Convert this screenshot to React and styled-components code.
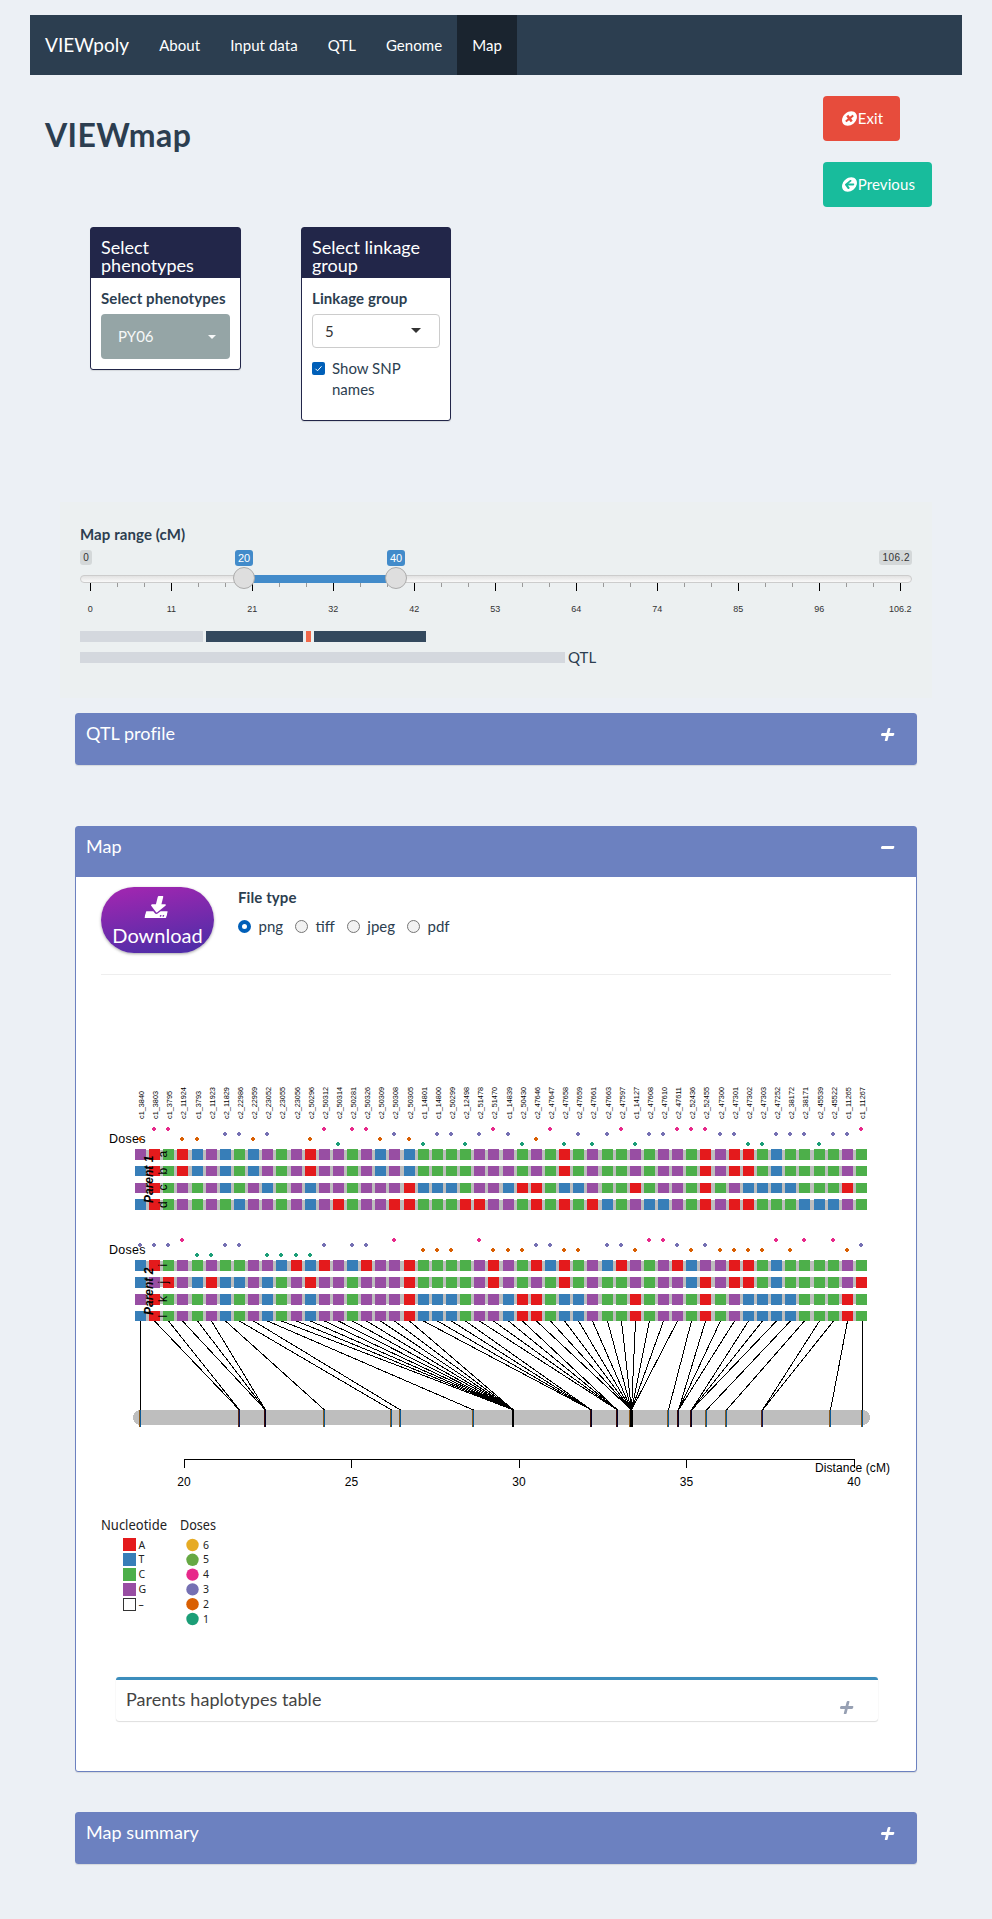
import React from 'react';
import styled, { createGlobalStyle, css } from 'styled-components';
import { FaTimesCircle, FaArrowCircleLeft, FaDownload, FaPlus, FaMinus } from 'react-icons/fa';

const Global = createGlobalStyle`
  *, *::before, *::after { box-sizing: border-box; }
  body {
    margin: 0;
    background: #ecf0f5;
    color: #2c3e50;
    font-family: Lato, "Liberation Sans", sans-serif;
    font-size: 15px;
    line-height: 21px;
  }
`;

const Page = styled.div`
  height: 1919px;
  padding: 15px 30px 0;
  overflow: hidden;
`;

const Navbar = styled.nav`
  display: flex;
  height: 60px;
  background: #2c3e50;
  color: #fff;
  letter-spacing: 0.05px;
`;
const Brand = styled.a`
  padding: 19px 15px 0;
  font-size: 19px;
  line-height: 21px;
`;
const NavItem = styled.a`
  padding: 20px 15px 0;
  background: ${p => (p.$active ? '#1a242f' : 'transparent')};
`;

const Header = styled.header`
  display: flex;
  justify-content: space-between;
  height: 152px;
  padding: 21px 30px 0 15px;
`;
const PageTitle = styled.h2`
  margin: 21px 0 0;
  font-size: 32px;
  line-height: 35px;
  font-weight: 700;
  letter-spacing: 0.4px;
`;
const Actions = styled.div`
  display: flex;
  flex-direction: column;
  align-items: flex-start;
  gap: 21px;
`;
const ActionButton = styled.button`
  display: flex;
  align-items: center;
  height: 45px;
  padding: 0 17px 0 18px;
  border: 0;
  border-radius: 4px;
  background: ${p => p.$color};
  color: #fff;
  font: inherit;
  letter-spacing: 0.1px;
`;
const Slant = styled.span`
  display: inline-flex;
  font-size: ${p => p.$size}px;
  transform: skewX(-14deg);
`;
const ButtonIcon = styled(Slant)`
  justify-content: center;
  width: 17px;
`;

const Filters = styled.section`
  display: flex;
  align-items: flex-start;
  gap: 60px;
  height: 275px;
  padding-left: 60px;
`;
const FilterBox = styled.div`
  width: ${p => p.$width}px;
  height: ${p => p.$height}px;
  border: 1px solid #222649;
  border-radius: 3px;
  background: #fff;
  box-shadow: 0 1px 1px rgba(0, 0, 0, 0.1);
`;
const FilterTitle = styled.h3`
  margin: 0;
  height: 50px;
  padding: 10px 10px 0;
  background: #222649;
  color: #fff;
  font-size: 18px;
  line-height: 18px;
  font-weight: 400;
`;
const FilterBody = styled.div`
  padding: 10px;
`;
const Label = styled.div`
  font-weight: 700;
  letter-spacing: 0.1px;
  white-space: nowrap;
`;
const Picker = styled.div`
  display: flex;
  align-items: center;
  justify-content: space-between;
  margin-top: 5px;
  border-radius: 4px;
  ${p => p.$filled
    ? css`height: 45px; padding: 0 14px 0 17px; background: #95a5a6; color: #f6f8f8;`
    : css`height: 34px; padding: 0 18px 0 12px; border: 1px solid #ccc; background: #fff; color: #333;`}
`;
const Caret = styled.i`
  margin-bottom: ${p => (p.$size > 4 ? 1 : 0)}px;
  border: ${p => p.$size}px solid transparent;
  border-top-color: currentColor;
  border-bottom: 0;
`;
const CheckRow = styled.label`
  display: flex;
  gap: 7px;
  margin-top: 10px;
`;
const CheckMark = styled.span`
  display: flex;
  flex: none;
  width: 13px;
  height: 13px;
  margin-top: 4px;
  border-radius: 2px;
  background: #005fb8;
`;

const RangeWell = styled.section`
  height: 196px;
  margin: 0 30px 15px;
  padding: 22px 20px 0;
  background: #ecf0f1;
`;
const Slider = styled.svg`
  display: block;
  width: 832px;
  height: 79px;
  margin-top: 2px;
  font-family: "Liberation Sans", Arial, sans-serif;
`;
const Track = styled.div`
  display: flex;
  align-items: center;
  gap: 3px;
  height: 21px;
`;
const Segment = styled.span`
  width: ${p => p.$width}px;
  height: 11px;
  background: ${p => p.$color};
`;

const Panel = styled.section`
  height: ${p => p.$height}px;
  margin: 0 45px ${p => p.$gap}px;
  border: 1px solid #6c81c0;
  border-radius: 3px;
  background: #fff;
  box-shadow: 0 1px 1px rgba(0, 0, 0, 0.1);
`;
const PanelHeader = styled.div`
  display: flex;
  justify-content: space-between;
  height: 50px;
  padding: 8px 21px 0 10px;
  background: #6c81c0;
  color: #fff;
`;
const PanelTitle = styled.h3`
  margin: 0;
  font-size: 18px;
  line-height: 22px;
  font-weight: 400;
  letter-spacing: 0.05px;
`;
const Toggle = styled(Slant)`
  height: 16px;
  margin-top: ${p => p.$top}px;
  color: ${p => p.$color || '#fff'};
`;
const PanelBody = styled.div`
  padding: 10px 25px;
`;
const Controls = styled.div`
  display: flex;
  gap: 24px;
  height: 88px;
  border-bottom: 1px solid #eee;
`;
const DownloadButton = styled.button`
  display: flex;
  flex-direction: column;
  align-items: center;
  gap: 4px;
  width: 113px;
  height: 66px;
  padding: 9px 0 0;
  border: 0;
  border-radius: 33px;
  background: linear-gradient(170deg, #9c27b0 10%, #512da8 90%);
  box-shadow: 0 1px 3px rgba(0, 0, 0, 0.35);
  color: #fff;
  font: 20px/26px Lato, sans-serif;
`;
const FileTypes = styled.div`
  display: flex;
  gap: 12px;
  margin-top: 8px;
`;
const Radio = styled.label`
  display: flex;
  align-items: center;
  gap: 7.5px;
  &::before {
    content: "";
    width: 13px;
    height: 13px;
    border-radius: 50%;
    border: ${p => (p.$on ? '4px solid #005fb8' : '1px solid #767676')};
    background: ${p => (p.$on ? '#fff' : '#f2f2f2')};
  }
`;
const Chart = styled.svg`
  display: block;
  width: 790px;
  height: 702px;
  font-family: "Liberation Sans", Arial, sans-serif;
  font-size: 12px;
`;
const SubPanel = styled.div`
  display: flex;
  justify-content: space-between;
  height: 44px;
  margin: 0 13px 0 15px;
  padding: 8px 24px 0 10px;
  border-top: 3px solid #3c8dbc;
  border-radius: 3px;
  box-shadow: 0 1px 1px rgba(0, 0, 0, 0.12), 0 0 1px rgba(0, 0, 0, 0.12);
  color: #444;
`;

const BASE = { A: '#e41a1c', T: '#377eb8', C: '#4daf4a', G: '#984ea3' };
const DOSE = { 6: '#e6ab24', 5: '#66a843', 4: '#e7298a', 3: '#7570b3', 2: '#d95f02', 1: '#1b9e77' };

const MARKERS = ('c1_3840 c1_3803 c1_3795 c2_11924 c1_3793 c2_11923 c2_11829 c2_22986 c2_22959 c2_23052 ' +
  'c2_23055 c2_23056 c2_50296 c2_50312 c2_50314 c2_50281 c2_50326 c2_50309 c2_50308 c2_50305 c1_14801 ' +
  'c1_14800 c2_50299 c2_12498 c2_51478 c2_51470 c1_14839 c2_50430 c2_47646 c2_47647 c2_47658 c2_47659 ' +
  'c2_47661 c2_47663 c2_47597 c1_14127 c2_47608 c2_47610 c2_47611 c2_52436 c2_52455 c2_47300 c2_47301 ' +
  'c2_47302 c2_47303 c2_47252 c2_38172 c2_38171 c2_45539 c2_45522 c1_11265 c1_11267').split(' ');

const PARENTS = [
  {
    name: 'Parent 1', nameY: 1203, dosesY: 1143, doseBase: 1149,
    doses: '24422-3323--2414' + '423213313431241313' + '413344433113331334',
    rows: [
      { id: 'a', y: 1149, h: 11, gy: 1150, gh: 10, ty: 1157.5, seq: 'GACATGTCTGCGAGGC' + 'GTGTCCCCGGGCGCACGC' + 'CGCGGCAGAACTCCCCGC' },
      { id: 'b', y: 1166, h: 10, gy: 1166, gh: 10, ty: 1174.5, seq: 'TACATGTCTGCGAGGC' + 'GTGTCCCCGGGCGCACGC' + 'CGCGGCAGAACTCCCCGC' },
      { id: 'c', y: 1183, h: 10, gy: 1183, gh: 10, ty: 1190.5, seq: 'GACGCGTCGTCGTGGC' + 'GGGATTTCGGTAACTTGC' + 'CACGGCACGTTTTCCCAC' },
      { id: 'd', y: 1199, h: 11, gy: 1200, gh: 10, ty: 1208, seq: 'TACGCGCTGGCGTGAC' + 'GGAACCCAAGGCACACAT' + 'CGTTGCAGAACCCTTTGC' },
    ],
  },
  {
    name: 'Parent 2', nameY: 1315, dosesY: 1254, doseBase: 1260,
    doses: '33341133-11113-3' + '3-4-222-42223322-3' + '32443232222424-423',
    rows: [
      { id: 'i', y: 1260, h: 11, gy: 1261, gh: 10, ty: 1266.5, seq: 'TACGCGCCGGTATAGT' + 'AGGACCCCGAGCATACGT' + 'AGCGATGGAACTCCCCGC' },
      { id: 'j', y: 1277, h: 11, gy: 1277, gh: 10, ty: 1283.5, seq: 'TGAGTATTGTCGAGGC' + 'GGGACCCCGAGCGCACGC' + 'CGCGGTAGAACTCCCCGA' },
      { id: 'k', y: 1294, h: 11, gy: 1294, gh: 10, ty: 1302, seq: 'GACGCGTCGTCGTGGC' + 'GGGATTTCGGTAACTTGC' + 'CACGGCACGTTTTCCCAC' },
      { id: 'l', y: 1311, h: 10, gy: 1311, gh: 10, ty: 1317.5, seq: 'TACGCGTCGTCGTGGC' + 'GGGATTTCGGTAACTTGC' + 'CACGGCACGTTTTCCCAC' },
    ],
  },
];

// Map positions on the chromosome: [x, number of markers that share it]
const LOCI = [[140, 1], [239, 2], [265, 3], [324, 1], [391, 1], [400, 1], [473, 1], [513, 10], [591, 4],
  [617, 4], [631, 11], [668, 1], [678, 3], [691, 3], [706, 1], [726, 1], [762, 2], [830, 1], [862, 1]];
const TARGETS = LOCI.flatMap(([x, n]) => Array(n).fill(x));
const lociColors = n => (n > 4 ? ['#000', '#000'] : n > 2 ? ['#3c0a08', '#04042c'] : n > 1 ? ['#5f2a14', '#0c1c60'] : ['#8a5a1c', '#0c5a98']);

const colX = i => 135 + Math.round(i * 14.137);
const lineStart = (i, target) => (Math.abs(colX(i) + 5 - target) < 2 ? target + 0.5 : colX(i) + 5.5);

function Plus({ x, y, color }) {
  return <path d={`M${x - 1} ${y - 2}h2v1h1v2h-1v1h-2v-1h-1v-2h1z`} fill={color} />;
}

function MapChart() {
  return (
    <Chart viewBox="101 975 790 702" shapeRendering="crispEdges">
      {MARKERS.map((m, i) => (
        <text key={m} transform={`translate(${colX(i) + 9} 1119) rotate(-90)`} fontSize="8"
          textLength={m.length * 4} lengthAdjust="spacingAndGlyphs">{m}</text>
      ))}
      {PARENTS.map(p => (
        <g key={p.name}>
          <text x="109" y={p.dosesY} fontSize="12.5" textLength="36.5">Doses</text>
          {[...p.doses].map((d, i) => d !== '-' && (
            <Plus key={i} x={colX(i) + 5} y={p.doseBase - 5 * d} color={DOSE[d]} />
          ))}
          {p.rows.map(r => (
            <g key={r.id}>
              <rect x="135" y={r.gy} width="732" height={r.gh} fill="#bebebe" />
              {[...r.seq].map((b, i) => (
                <rect key={i} x={colX(i)} y={r.y} width="11" height={r.h} fill={BASE[b]} />
              ))}
              <text transform={`translate(167 ${r.ty}) rotate(-90)`}>{r.id}</text>
            </g>
          ))}
          <text transform={`translate(153 ${p.nameY}) rotate(-90)`} fontWeight="700" fontStyle="italic">{p.name}</text>
        </g>
      ))}
      <rect x="133" y="1410" width="737" height="15" rx="7.5" fill="#bebebe" />
      {TARGETS.map((x, i) => (
        <line key={i} x1={lineStart(i, x)} y1="1321" x2={x + 0.5} y2="1410" stroke="#000" />
      ))}
      {LOCI.map(([x, n]) => {
        const [left, right] = lociColors(n);
        return (
          <g key={x}>
            <rect x={x - 1} y="1410" width="1" height="17" fill={left} />
            <rect x={x} y="1410" width={n === 11 ? 2 : 1} height="17" fill={right} />
            {n === 11 && <rect x={x - 2} y="1410" width="1" height="17" fill="#8a5a1c" />}
          </g>
        );
      })}
      <path d="M184.5 1467.5V1459.5H854.5V1467.5M351.5 1459.5v8M519.5 1459.5v8M686.5 1459.5v8" fill="none" stroke="#000" />
      {[20, 25, 30, 35, 40].map((n, i) => (
        <text key={n} x={184 + i * 167.5} y="1486" textAnchor="middle">{n}</text>
      ))}
      <text x="815" y="1472" textLength="75">Distance (cM)</text>
      <g fontFamily="'Noto Sans', sans-serif" fontSize="13.5" fill="#222" shapeRendering="auto">
        <text x="101" y="1529.5" textLength="66" lengthAdjust="spacingAndGlyphs">Nucleotide</text>
        <text x="180" y="1529.5" textLength="36" lengthAdjust="spacingAndGlyphs">Doses</text>
        {['A', 'T', 'C', 'G', '–'].map((b, i) => (
          <g key={b}>
            <rect x="123.5" y={1538.5 + i * 15} width="12" height="12" fill={BASE[b] || '#fff'} stroke={BASE[b] || '#333'} />
            <text x="138.5" y={1548.5 + i * 14.9} fontSize="10.5">{b}</text>
          </g>
        ))}
        {[6, 5, 4, 3, 2, 1].map((d, i) => (
          <g key={d}>
            <circle cx="192.5" cy={1545 + i * 14.8} r="6.2" fill={DOSE[d]} />
            <text x="203" y={1548.5 + i * 14.8} fontSize="10.5">{d}</text>
          </g>
        ))}
      </g>
    </Chart>
  );
}

function RangeSlider() {
  const labels = ['0', '11', '21', '32', '42', '53', '64', '74', '85', '96', '106.2'];
  return (
    <Slider viewBox="80 547 832 79">
      <defs>
        <linearGradient id="track" x1="0" y1="0" x2="0" y2="1">
          <stop offset="0" stopColor="#e0e0e0" />
          <stop offset="1" stopColor="#fbfbfb" />
        </linearGradient>
      </defs>
      <rect x="80" y="550" width="12" height="15" rx="3" fill="#d4d8d9" />
      <text x="86" y="561" fontSize="10" textAnchor="middle" fill="#333">0</text>
      <rect x="879" y="550" width="33" height="15" rx="3" fill="#d4d8d9" />
      <text x="882.5" y="561" fontSize="10" textLength="27" fill="#333">106.2</text>
      <rect x="80.5" y="575.5" width="831" height="7" rx="3.5" fill="url(#track)" stroke="#ccc" />
      <rect x="244" y="575" width="152" height="8" fill="#428bca" />
      {Array.from({ length: 31 }, (_, i) => (
        <rect key={i} x={90 + i * 27} y="583" width="1" height={i % 3 ? 4 : 8} fill={i % 3 ? '#999' : '#000'} />
      ))}
      {labels.map((l, i) => (
        <text key={l} x={90.3 + i * 81} y="611.5" fontSize="9" textAnchor="middle" fill="#333">{l}</text>
      ))}
      {[[244, 20], [396, 40]].map(([x, v]) => (
        <g key={v}>
          <rect x={x - 9} y="550" width="18" height="16" rx="3" fill="#428bca" />
          <text x={x} y="562" fontSize="11" textAnchor="middle" fill="#fff">{v}</text>
          <circle cx={x} cy="578" r="10.5" fill="#dedede" stroke="#ababab" />
        </g>
      ))}
    </Slider>
  );
}

export default function App() {
  return (
    <Page>
      <Global />
      <Navbar>
        <Brand>VIEWpoly</Brand>
        <NavItem>About</NavItem>
        <NavItem>Input data</NavItem>
        <NavItem>QTL</NavItem>
        <NavItem>Genome</NavItem>
        <NavItem $active>Map</NavItem>
      </Navbar>

      <Header>
        <PageTitle>VIEWmap</PageTitle>
        <Actions>
          <ActionButton $color="#e74c3c"><ButtonIcon $size={15}><FaTimesCircle /></ButtonIcon>Exit</ActionButton>
          <ActionButton $color="#18bc9c"><ButtonIcon $size={15}><FaArrowCircleLeft /></ButtonIcon>Previous</ActionButton>
        </Actions>
      </Header>

      <Filters>
        <FilterBox $width={151} $height={143}>
          <FilterTitle>Select phenotypes</FilterTitle>
          <FilterBody>
            <Label>Select phenotypes</Label>
            <Picker $filled>PY06<Caret $size={4} /></Picker>
          </FilterBody>
        </FilterBox>
        <FilterBox $width={150} $height={194}>
          <FilterTitle>Select linkage group</FilterTitle>
          <FilterBody>
            <Label>Linkage group</Label>
            <Picker>5<Caret $size={5} /></Picker>
            <CheckRow>
              <CheckMark>
                <svg width="13" height="13"><path d="M3.5 6.8l2 2 4-4.5" fill="none" stroke="#fff" /></svg>
              </CheckMark>
              Show SNP names
            </CheckRow>
          </FilterBody>
        </FilterBox>
      </Filters>

      <RangeWell>
        <Label>Map range (cM)</Label>
        <RangeSlider />
        <Track>
          <Segment $width={123} $color="#d4d8de" />
          <Segment $width={97} $color="#34495e" />
          <Segment $width={5} $color="#f26849" />
          <Segment $width={112} $color="#34495e" />
        </Track>
        <Track>
          <Segment $width={485} $color="#d4d8de" />
          QTL
        </Track>
      </RangeWell>

      <Panel $height={52} $gap={61}>
        <PanelHeader>
          <PanelTitle>QTL profile</PanelTitle>
          <Toggle $size={15} $top={5}><FaPlus /></Toggle>
        </PanelHeader>
      </Panel>

      <Panel $height={946} $gap={40}>
        <PanelHeader>
          <PanelTitle>Map</PanelTitle>
          <Toggle $size={15} $top={5}><FaMinus /></Toggle>
        </PanelHeader>
        <PanelBody>
          <Controls>
            <DownloadButton>
              <Slant $size={22}><FaDownload /></Slant>
              Download
            </DownloadButton>
            <div>
              <Label>File type</Label>
              <FileTypes>
                <Radio $on>png</Radio>
                <Radio>tiff</Radio>
                <Radio>jpeg</Radio>
                <Radio>pdf</Radio>
              </FileTypes>
            </div>
          </Controls>
          <MapChart />
          <SubPanel>
            <PanelTitle>Parents haplotypes table</PanelTitle>
            <Toggle $size={15} $top={12} $color="#97a0b3"><FaPlus /></Toggle>
          </SubPanel>
        </PanelBody>
      </Panel>

      <Panel $height={52} $gap={0}>
        <PanelHeader>
          <PanelTitle>Map summary</PanelTitle>
          <Toggle $size={15} $top={5}><FaPlus /></Toggle>
        </PanelHeader>
      </Panel>
    </Page>
  );
}
